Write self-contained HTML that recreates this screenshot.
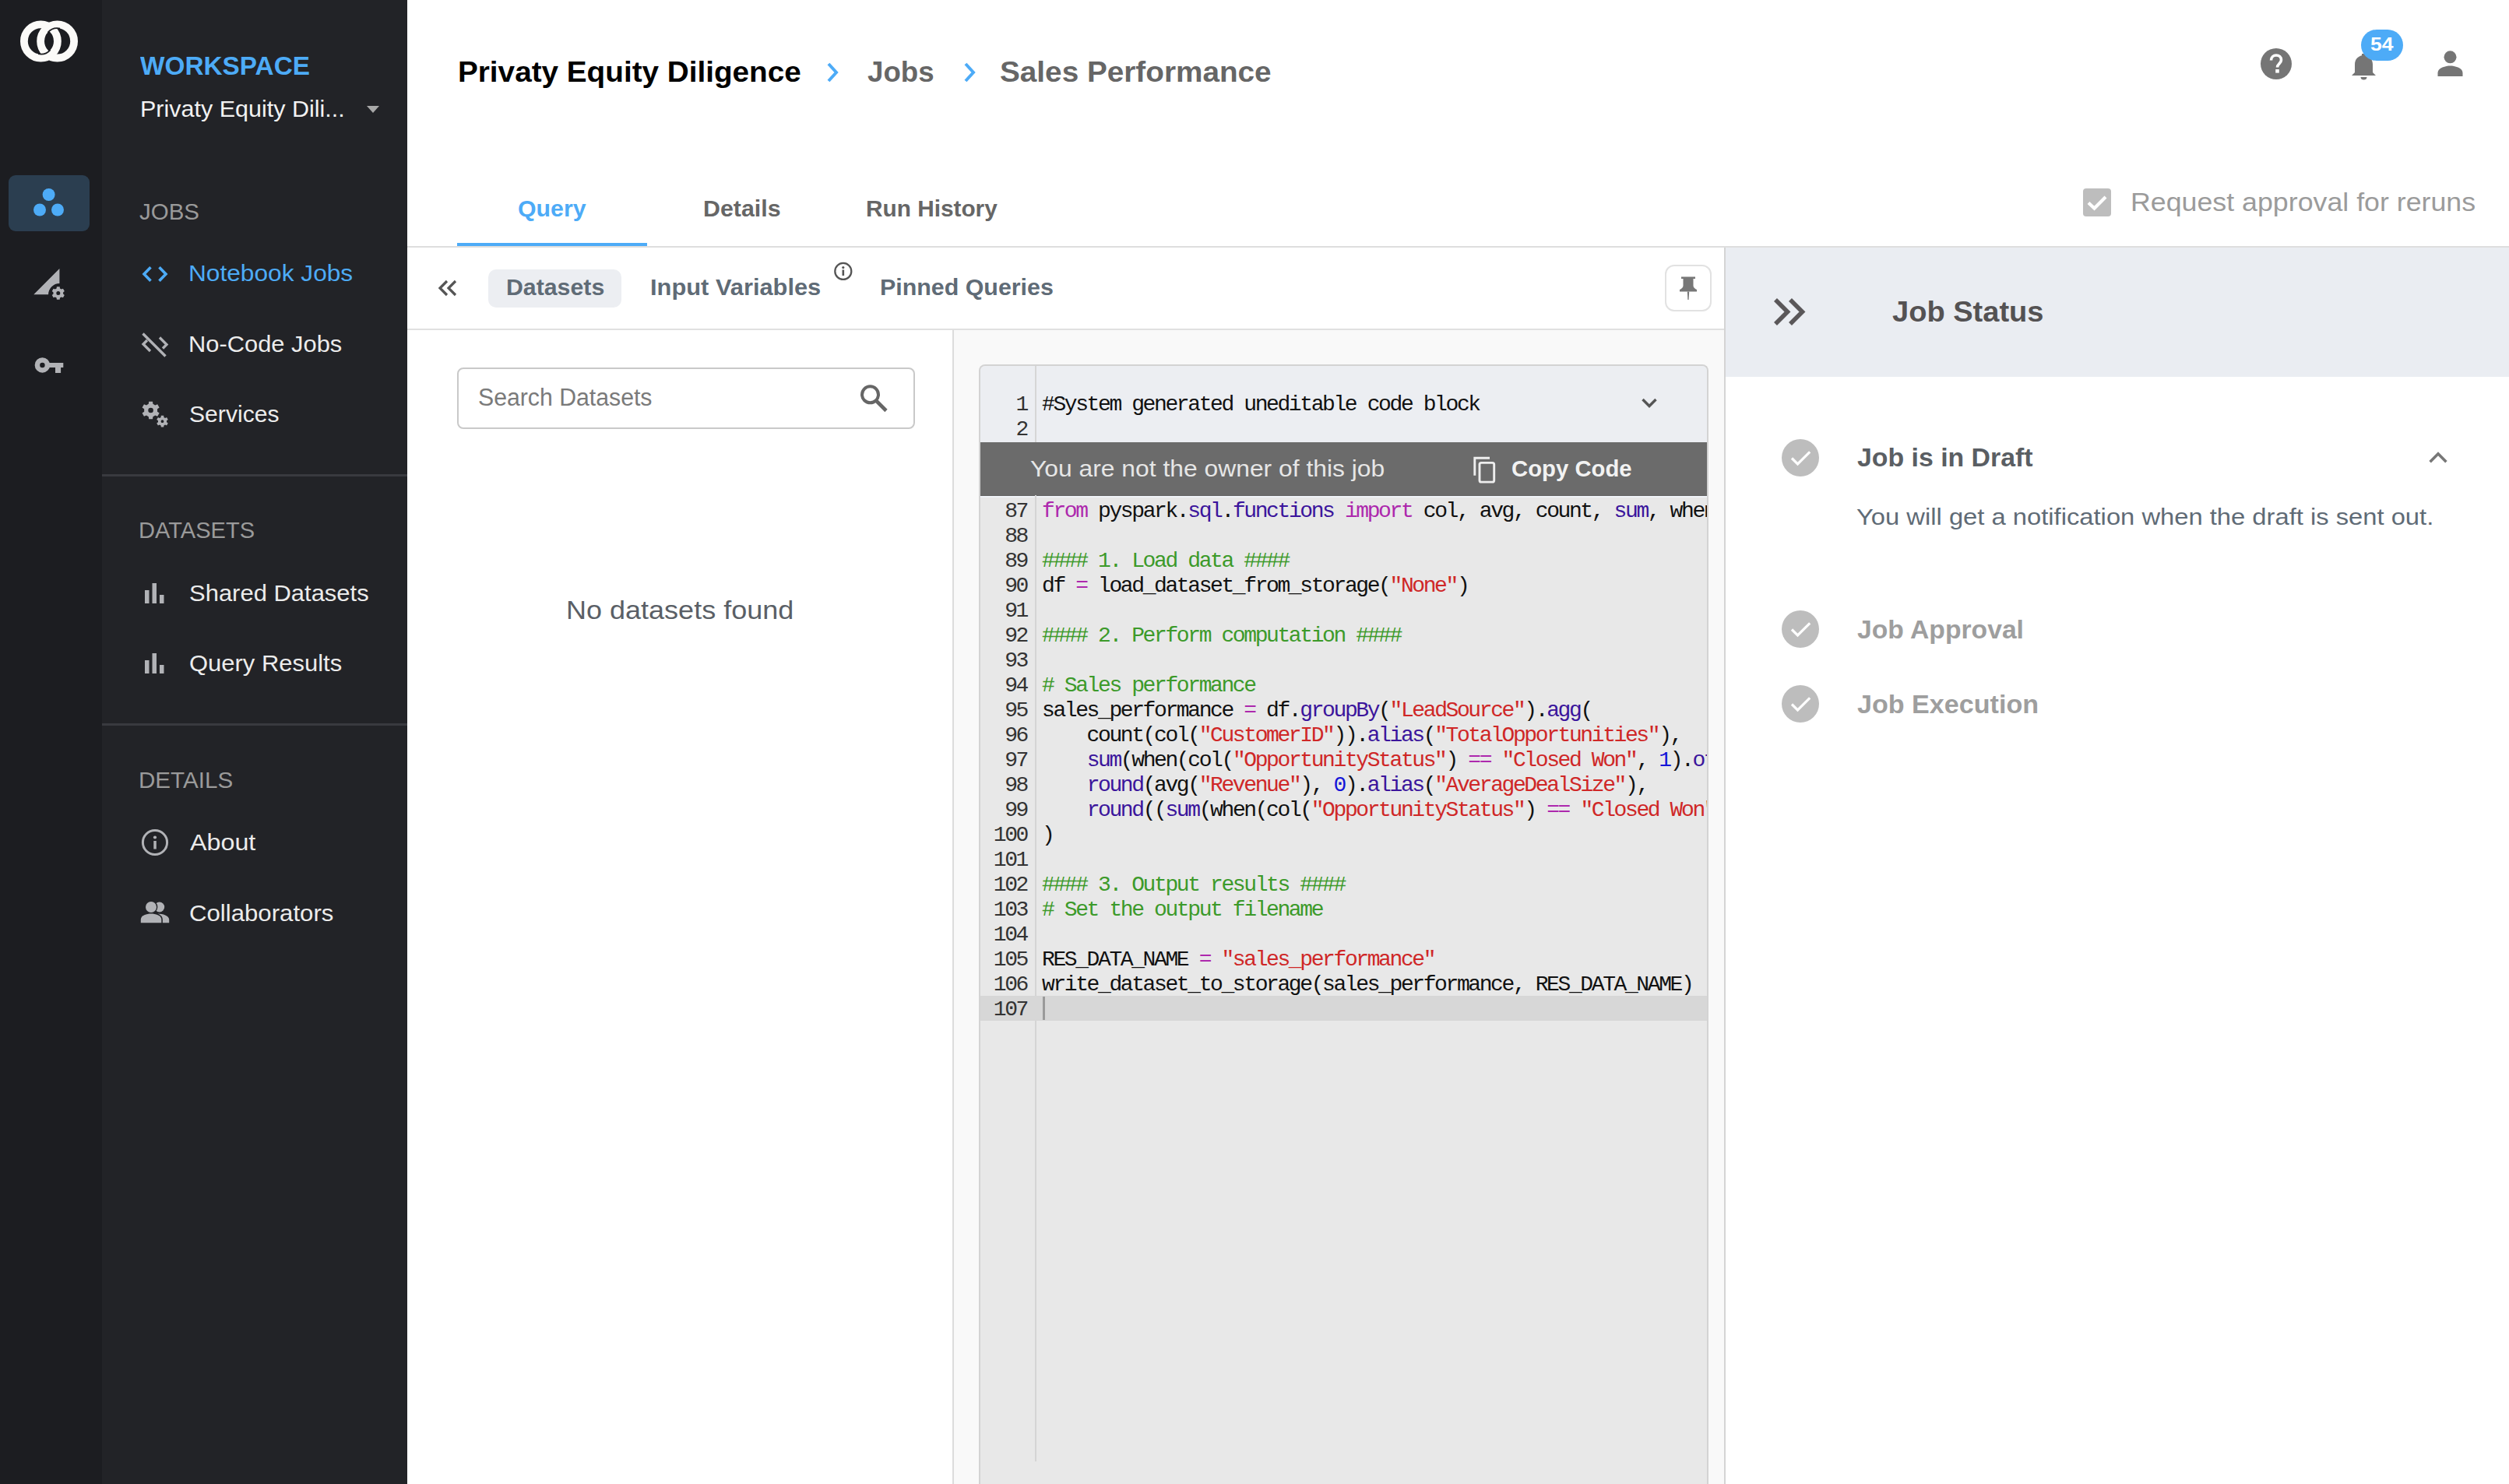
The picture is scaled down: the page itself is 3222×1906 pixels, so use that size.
<!DOCTYPE html><html><head><meta charset="utf-8"><style>
html,body{margin:0;padding:0;background:#fff;width:3222px;height:1906px;overflow:hidden;position:relative}
body>div,body>svg,.clip>div{position:absolute}
.t{white-space:nowrap;line-height:1;transform-origin:0 0;font-family:"Liberation Sans",sans-serif}
.ln{position:absolute;left:0px;width:60px;text-align:right;font-family:"Liberation Mono",monospace;font-size:28px;letter-spacing:-2.4px;line-height:32px;color:#333;white-space:pre}
.cl{position:absolute;left:79px;font-family:"Liberation Mono",monospace;font-size:28px;letter-spacing:-2.4px;line-height:32px;color:#111;white-space:pre}
.k{color:#ad28ad}.p{color:#3b159c}.s{color:#cf2727}.n{color:#1414d8}.c{color:#3c9a2a}
.clip{position:absolute;left:1259px;top:470px;width:933px;height:1436px;overflow:hidden}
</style></head><body>
<div style="left:0px;top:0px;width:131px;height:1906px;background:#1c1d21;"></div>
<div style="left:131px;top:0px;width:392px;height:1906px;background:#222327;"></div>
<div style="left:131px;top:609px;width:392px;height:3px;background:#393a3f;"></div>
<div style="left:131px;top:929px;width:392px;height:3px;background:#393a3f;"></div>
<div style="left:11px;top:225px;width:104px;height:72px;background:#2b3e50;border-radius:9px"></div>
<div style="left:587px;top:312px;width:244px;height:4px;background:#4dabf7;"></div>
<div style="left:523px;top:316px;width:2699px;height:2px;background:#dedede;"></div>
<div style="left:523px;top:422px;width:1691px;height:2px;background:#e0e0e0;"></div>
<div style="left:627px;top:346px;width:171px;height:49px;background:#eceef2;border-radius:10px"></div>
<div style="left:587px;top:472px;width:588px;height:79px;background:#fff;border:2px solid #c9c9c9;border-radius:8px;box-sizing:border-box"></div>
<div style="left:1225px;top:424px;width:989px;height:1482px;background:#f9f9f9;"></div>
<div style="left:1223px;top:424px;width:2px;height:1482px;background:#dcdcdc;"></div>
<div style="left:2214px;top:318px;width:2px;height:1588px;background:#d4d4d4;"></div>
<div style="left:2216px;top:318px;width:1006px;height:166px;background:#eaedf2;"></div>
<div style="left:2138px;top:340px;width:60px;height:60px;background:#fff;border:2px solid #e2e2e2;border-radius:12px;box-sizing:border-box"></div>
<div style="left:2675px;top:242px;width:36px;height:36px;background:#bdbdbd;border-radius:4px"></div>
<svg style="left:3015px;top:60px" width="42" height="46" viewBox="0 0 42 46"><path d="M5 37 L9 33 V23 C9 16 13 12.5 18 11.2 V9 H23 V11.2 C28 12.5 32 16 32 23 V33 L36 37 Z" fill="#757575"/><path d="M16.5 39 H24.5 C24.5 41.5 22.8 42.5 20.5 42.5 C18.2 42.5 16.5 41.5 16.5 39 Z" fill="#757575"/></svg>
<div style="left:3032px;top:38px;width:54px;height:40px;background:#4dabf7;border-radius:20px"></div>
<div style="left:1257px;top:468px;width:937px;height:1438px;background:#e8e8e8;border:2px solid #d3d3d3;border-bottom:none;border-radius:8px 8px 0 0;box-sizing:border-box"></div>
<div style="left:1259px;top:470px;width:933px;height:98px;background:#eceef2;border-radius:6px 6px 0 0"></div>
<div style="left:1329px;top:470px;width:2px;height:98px;background:#d6d6d6;"></div>
<div style="left:1259px;top:568px;width:933px;height:69px;background:#6b6b6b;"></div>
<div style="left:1259px;top:636px;width:933px;height:1px;background:#636363;"></div>
<div style="left:1259px;top:637px;width:933px;height:2px;background:#f0f3f7;"></div>
<div style="left:1329px;top:636px;width:2px;height:1241px;background:#d4d4d4;"></div>
<div style="left:1259px;top:1279px;width:933px;height:32px;background:#d7d7d7;"></div>
<div style="left:1339px;top:1280px;width:3px;height:30px;background:#9a9a9a;"></div>
<div class="clip"><div class="ln" style="top:34px">1</div>
<div class="cl" style="top:34px">#System generated uneditable code block</div>
<div class="ln" style="top:66px">2</div>
<div class="ln" style="top:171px">87</div>
<div class="cl" style="top:171px"><span class="k">from</span> pyspark.<span class="p">sql</span>.<span class="p">functions</span> <span class="k">import</span> col, avg, count, <span class="p">sum</span>, when, round</div>
<div class="ln" style="top:203px">88</div>
<div class="ln" style="top:235px">89</div>
<div class="cl" style="top:235px"><span class="c">#### 1. Load data ####</span></div>
<div class="ln" style="top:267px">90</div>
<div class="cl" style="top:267px">df <span class="k">=</span> load_dataset_from_storage(<span class="s">&quot;None&quot;</span>)</div>
<div class="ln" style="top:299px">91</div>
<div class="ln" style="top:331px">92</div>
<div class="cl" style="top:331px"><span class="c">#### 2. Perform computation ####</span></div>
<div class="ln" style="top:363px">93</div>
<div class="ln" style="top:395px">94</div>
<div class="cl" style="top:395px"><span class="c"># Sales performance</span></div>
<div class="ln" style="top:427px">95</div>
<div class="cl" style="top:427px">sales_performance <span class="k">=</span> df.<span class="p">groupBy</span>(<span class="s">&quot;LeadSource&quot;</span>).<span class="p">agg</span>(</div>
<div class="ln" style="top:459px">96</div>
<div class="cl" style="top:459px">    count(col(<span class="s">&quot;CustomerID&quot;</span>)).<span class="p">alias</span>(<span class="s">&quot;TotalOpportunities&quot;</span>),</div>
<div class="ln" style="top:491px">97</div>
<div class="cl" style="top:491px">    <span class="p">sum</span>(when(col(<span class="s">&quot;OpportunityStatus&quot;</span>) <span class="k">==</span> <span class="s">&quot;Closed Won&quot;</span>, <span class="n">1</span>).<span class="p">otherwise</span>(<span class="n">0</span>))</div>
<div class="ln" style="top:523px">98</div>
<div class="cl" style="top:523px">    <span class="p">round</span>(avg(<span class="s">&quot;Revenue&quot;</span>), <span class="n">0</span>).<span class="p">alias</span>(<span class="s">&quot;AverageDealSize&quot;</span>),</div>
<div class="ln" style="top:555px">99</div>
<div class="cl" style="top:555px">    <span class="p">round</span>((<span class="p">sum</span>(when(col(<span class="s">&quot;OpportunityStatus&quot;</span>) <span class="k">==</span> <span class="s">&quot;Closed Won&quot;</span>, <span class="n">1</span>)</div>
<div class="ln" style="top:587px">100</div>
<div class="cl" style="top:587px">)</div>
<div class="ln" style="top:619px">101</div>
<div class="ln" style="top:651px">102</div>
<div class="cl" style="top:651px"><span class="c">#### 3. Output results ####</span></div>
<div class="ln" style="top:683px">103</div>
<div class="cl" style="top:683px"><span class="c"># Set the output filename</span></div>
<div class="ln" style="top:715px">104</div>
<div class="ln" style="top:747px">105</div>
<div class="cl" style="top:747px">RES_DATA_NAME <span class="k">=</span> <span class="s">&quot;sales_performance&quot;</span></div>
<div class="ln" style="top:779px">106</div>
<div class="cl" style="top:779px">write_dataset_to_storage(sales_performance, RES_DATA_NAME)</div>
<div class="ln" style="top:811px">107</div></div>
<div class="t" style="left:179.90px;top:67.30px;font-size:34px;color:#4dabf7;font-weight:700;transform:scaleX(0.9807)">WORKSPACE</div>
<div class="t" style="left:179.57px;top:125.00px;font-size:30px;color:#f2f2f2;font-weight:400;transform:scaleX(1.0167)">Privaty Equity Dili...</div>
<div class="t" style="left:178.80px;top:256.50px;font-size:30px;color:#9a9a9a;font-weight:400;transform:scaleX(0.9826)">JOBS</div>
<div class="t" style="left:242.29px;top:336.20px;font-size:30px;color:#4dabf7;font-weight:400;transform:scaleX(1.0552)">Notebook Jobs</div>
<div class="t" style="left:242.34px;top:426.90px;font-size:30px;color:#ececec;font-weight:400;transform:scaleX(1.0288)">No-Code Jobs</div>
<div class="t" style="left:242.50px;top:516.70px;font-size:30px;color:#ececec;font-weight:400;transform:scaleX(1.0041)">Services</div>
<div class="t" style="left:178.36px;top:665.90px;font-size:30px;color:#9a9a9a;font-weight:400;transform:scaleX(0.9688)">DATASETS</div>
<div class="t" style="left:242.67px;top:747.00px;font-size:30px;color:#ececec;font-weight:400;transform:scaleX(1.0322)">Shared Datasets</div>
<div class="t" style="left:242.67px;top:836.70px;font-size:30px;color:#ececec;font-weight:400;transform:scaleX(1.0321)">Query Results</div>
<div class="t" style="left:178.33px;top:986.50px;font-size:30px;color:#9a9a9a;font-weight:400;transform:scaleX(0.9866)">DETAILS</div>
<div class="t" style="left:243.70px;top:1067.00px;font-size:30px;color:#ececec;font-weight:400;transform:scaleX(1.0751)">About</div>
<div class="t" style="left:242.66px;top:1157.50px;font-size:30px;color:#ececec;font-weight:400;transform:scaleX(1.0390)">Collaborators</div>
<div class="t" style="left:587.81px;top:74.45px;font-size:37px;color:#000000;font-weight:700;transform:scaleX(1.0457)">Privaty Equity Diligence</div>
<div class="t" style="left:1114.00px;top:74.45px;font-size:37px;color:#666666;font-weight:700;transform:scaleX(0.9909)">Jobs</div>
<div class="t" style="left:1283.95px;top:74.45px;font-size:37px;color:#666666;font-weight:700;transform:scaleX(1.0464)">Sales Performance</div>
<div class="t" style="left:664.99px;top:253.40px;font-size:30px;color:#4dabf7;font-weight:700;transform:scaleX(1.0091)">Query</div>
<div class="t" style="left:903.18px;top:253.40px;font-size:30px;color:#666666;font-weight:700;transform:scaleX(1.0116)">Details</div>
<div class="t" style="left:1111.71px;top:253.40px;font-size:30px;color:#666666;font-weight:700;transform:scaleX(0.9927)">Run History</div>
<div class="t" style="left:2735.63px;top:242.65px;font-size:33px;color:#9b9b9b;font-weight:400;transform:scaleX(1.0833)">Request approval for reruns</div>
<div class="t" style="left:650.16px;top:355.15px;font-size:29px;color:#5f6b76;font-weight:700;transform:scaleX(1.0440)">Datasets</div>
<div class="t" style="left:834.94px;top:355.15px;font-size:29px;color:#5f6b76;font-weight:700;transform:scaleX(1.0629)">Input Variables</div>
<div class="t" style="left:1130.35px;top:355.15px;font-size:29px;color:#5f6b76;font-weight:700;transform:scaleX(1.0475)">Pinned Queries</div>
<div class="t" style="left:614.42px;top:494.65px;font-size:31px;color:#7a7a7a;font-weight:400;transform:scaleX(0.9751)">Search Datasets</div>
<div class="t" style="left:726.62px;top:766.75px;font-size:33px;color:#5a5f66;font-weight:400;transform:scaleX(1.0911)">No datasets found</div>
<div class="t" style="left:1322.50px;top:587.10px;font-size:30px;color:#e6e6e6;font-weight:400;transform:scaleX(1.0607)">You are not the owner of this job</div>
<div class="t" style="left:1941.02px;top:587.10px;font-size:30px;color:#f2f2f2;font-weight:700;transform:scaleX(0.9767)">Copy Code</div>
<div class="t" style="left:2429.60px;top:382.35px;font-size:37px;color:#545253;font-weight:700;transform:scaleX(1.0283)">Job Status</div>
<div class="t" style="left:2384.50px;top:570.10px;font-size:34px;color:#5a5e63;font-weight:700;transform:scaleX(0.9948)">Job is in Draft</div>
<div class="t" style="left:2383.70px;top:650.35px;font-size:29px;color:#5f6b76;font-weight:400;transform:scaleX(1.1288)">You will get a notification when the draft is sent out.</div>
<div class="t" style="left:2384.50px;top:790.50px;font-size:34px;color:#9e9e9e;font-weight:700;transform:scaleX(0.9907)">Job Approval</div>
<div class="t" style="left:2384.50px;top:886.90px;font-size:34px;color:#9e9e9e;font-weight:700;transform:scaleX(1.0030)">Job Execution</div>
<div class="t" style="left:3043.70px;top:45.30px;font-size:24px;color:#ffffff;font-weight:700;transform:scaleX(1.1080)">54</div>
<svg style="left:0px;top:0px" width="130" height="100" viewBox="0 0 130 100"><g fill="none" stroke="#fbfaf8" stroke-width="9.8">
<ellipse cx="52.4" cy="52.9" rx="21.5" ry="21.6"/><ellipse cx="73.6" cy="52.9" rx="21.5" ry="21.6"/></g>
<g fill="none" stroke="#1c1d21" stroke-width="1.8">
<path d="M61.41 41.73 A16.4 16.7 0 0 1 77.01 36.56"/>
<path d="M64.59 64.07 A16.4 16.7 0 0 1 48.99 69.24"/></g></svg>
<svg style="left:40px;top:236px" width="46" height="46" viewBox="0 0 46 46"><g fill="#4dabf7"><circle cx="22.6" cy="14" r="8"/><circle cx="11" cy="33.5" r="8"/><circle cx="34" cy="33.5" r="8"/></g></svg>
<svg style="left:35px;top:335px" width="60" height="60" viewBox="0 0 60 60"><path d="M8.3 43.3 L41.4 9.9 V28.9 A14.4 14.4 0 0 0 27.1 43.3 Z" fill="#b1b2b6"/><path fill-rule="evenodd" fill="#b1b2b6" d="M37.61 35.49 L37.91 33.32 L41.69 33.32 L41.99 35.49 L43.91 36.60 L45.94 35.77 L47.83 39.04 L46.10 40.39 L46.10 42.61 L47.83 43.96 L45.94 47.23 L43.91 46.40 L41.99 47.51 L41.69 49.68 L37.91 49.68 L37.61 47.51 L35.69 46.40 L33.66 47.23 L31.77 43.96 L33.50 42.61 L33.50 40.39 L31.77 39.04 L33.66 35.77 L35.69 36.60 Z M42.30 41.50 A2.5 2.5 0 1 0 37.30 41.50 A2.5 2.5 0 1 0 42.30 41.50 Z"/></svg>
<svg style="left:40px;top:452px" width="48" height="34" viewBox="0 0 48 34"><circle cx="14.4" cy="16.9" r="6.5" fill="none" stroke="#b1b2b6" stroke-width="6.5"/><path d="M20 13.9 H41.3 V20.1 H38.1 V27 H31 V20.1 H20 Z" fill="#b1b2b6"/></svg>
<svg style="left:178px;top:336px" width="42" height="32" viewBox="0 0 42 32"><g fill="none" stroke="#4dabf7" stroke-width="3.6" stroke-linecap="butt"><path d="M15.5 7.2 L7 16 L15.5 24.8"/><path d="M26.5 7.2 L35 16 L26.5 24.8"/></g></svg>
<svg style="left:170px;top:420px" width="60" height="60" viewBox="0 0 60 60"><g fill="none" stroke="#b1b2b6" stroke-width="3.3"><path d="M13.5 8.5 L42.5 37.5"/><path d="M19 17 L14 22 L23 31"/><path d="M35 13.5 L44 22.5 L39 27.5"/></g></svg>
<svg style="left:170px;top:500px" width="60" height="60" viewBox="0 0 60 60"><path fill-rule="evenodd" fill="#b1b2b6" d="M20.80 18.87 L21.19 15.65 L26.01 15.65 L26.40 18.87 L29.24 20.51 L32.22 19.24 L34.63 23.42 L32.04 25.36 L32.04 28.64 L34.63 30.58 L32.22 34.76 L29.24 33.49 L26.40 35.13 L26.01 38.35 L21.19 38.35 L20.80 35.13 L17.96 33.49 L14.98 34.76 L12.57 30.58 L15.16 28.64 L15.16 25.36 L12.57 23.42 L14.98 19.24 L17.96 20.51 Z M26.90 27.00 A3.3 3.3 0 1 0 20.30 27.00 A3.3 3.3 0 1 0 26.90 27.00 Z"/><path fill-rule="evenodd" fill="#b1b2b6" d="M36.58 35.94 L36.79 33.79 L40.21 33.79 L40.42 35.94 L42.10 36.91 L44.06 36.02 L45.77 38.98 L44.01 40.23 L44.01 42.17 L45.77 43.42 L44.06 46.38 L42.10 45.49 L40.42 46.46 L40.21 48.61 L36.79 48.61 L36.58 46.46 L34.90 45.49 L32.94 46.38 L31.23 43.42 L32.99 42.17 L32.99 40.23 L31.23 38.98 L32.94 36.02 L34.90 36.91 Z M40.40 41.20 A1.9 1.9 0 1 0 36.60 41.20 A1.9 1.9 0 1 0 40.40 41.20 Z"/></svg>
<svg style="left:183px;top:748px" width="34" height="32" viewBox="0 0 34 32"><g fill="#b1b2b6"><rect x="3" y="10" width="5.5" height="17"/><rect x="12.5" y="1" width="5.5" height="26"/><rect x="22" y="16" width="5.5" height="11"/></g></svg>
<svg style="left:183px;top:838px" width="34" height="32" viewBox="0 0 34 32"><g fill="#b1b2b6"><rect x="3" y="10" width="5.5" height="17"/><rect x="12.5" y="1" width="5.5" height="26"/><rect x="22" y="16" width="5.5" height="11"/></g></svg>
<svg style="left:178px;top:1061px" width="42" height="42" viewBox="0 0 42 42"><circle cx="21" cy="21" r="15.6" fill="none" stroke="#b1b2b6" stroke-width="3"/><rect x="19.3" y="19" width="3.5" height="10.5" fill="#b1b2b6"/><circle cx="21" cy="14.5" r="2.1" fill="#b1b2b6"/></svg>
<svg style="left:176px;top:1152px" width="46" height="38" viewBox="0 0 46 38"><g fill="#b1b2b6"><circle cx="28.8" cy="13" r="6.4"/><circle cx="18" cy="13" r="8.4" fill="#222327"/><circle cx="18" cy="13" r="7"/><path d="M26.5 21.4 C33 21.6 41.2 23.8 41.2 29 V33.2 H32.3 V29 C32.3 25.8 30.2 23.2 26.5 21.4 Z"/><path d="M4.8 33.2 V29 C4.8 23.5 12.5 21.4 18 21.4 C23.5 21.4 31.3 23.5 31.3 29 V33.2 Z" stroke="#222327" stroke-width="3" paint-order="stroke"/></g></svg>
<svg style="left:470px;top:135px" width="18" height="11" viewBox="0 0 18 11"><path d="M1 1 H17 L9 10 Z" fill="#a8a8a8"/></svg>
<svg style="left:1058px;top:78px" width="24" height="30" viewBox="0 0 24 30"><path d="M6 4 L16 15 L6 26" fill="none" stroke="#4dabf7" stroke-width="4"/></svg>
<svg style="left:1234px;top:78px" width="24" height="30" viewBox="0 0 24 30"><path d="M6 4 L16 15 L6 26" fill="none" stroke="#4dabf7" stroke-width="4"/></svg>
<svg style="left:2900px;top:60px" width="46" height="46" viewBox="0 0 46 46"><circle cx="23" cy="22" r="20" fill="#757575"/><path d="M16.5 17.5 C16.5 13.5 19.5 11 23 11 C26.8 11 29.5 13.5 29.5 17 C29.5 21.5 24.5 22 24.5 26.5" fill="none" stroke="#fff" stroke-width="3.6"/><rect x="22.2" y="29" width="4.6" height="4.6" fill="#fff"/></svg>
<svg style="left:3126px;top:62px" width="42" height="40" viewBox="0 0 42 40"><circle cx="20.5" cy="11.3" r="8" fill="#757575"/><path d="M4.5 36 V31.5 C4.5 25 15 22.5 20.5 22.5 C26 22.5 36.5 25 36.5 31.5 V36 Z" fill="#757575"/></svg>
<svg style="left:2675px;top:242px" width="36" height="36" viewBox="0 0 36 36"><path d="M7 18.5 L14.5 25.5 L29 11" fill="none" stroke="#fff" stroke-width="4.2"/></svg>
<svg style="left:558px;top:354px" width="32" height="32" viewBox="0 0 32 32"><g fill="none" stroke="#555" stroke-width="3.2"><path d="M16 7 L7 16 L16 25"/><path d="M27 7 L18 16 L27 25"/></g></svg>
<svg style="left:1068px;top:334px" width="30" height="30" viewBox="0 0 30 30"><circle cx="14.8" cy="14.4" r="10.5" fill="none" stroke="#555" stroke-width="2.3"/><rect x="13.5" y="12.5" width="2.6" height="7.5" fill="#555"/><circle cx="14.8" cy="9.6" r="1.6" fill="#555"/></svg>
<svg style="left:2150px;top:350px" width="36" height="40" viewBox="0 0 36 40"><path d="M9 5.5 H27 V8 H24.5 V17 C24.5 19.5 27 21 29 22 V24.5 H7 V22 C9 21 11.5 19.5 11.5 17 V8 H9 Z" fill="#777"/><path d="M16.8 24.5 H19.2 L18.6 35 H17.4 Z" fill="#777"/></svg>
<svg style="left:1100px;top:490px" width="44" height="44" viewBox="0 0 44 44"><circle cx="17.5" cy="16.8" r="10.5" fill="none" stroke="#666" stroke-width="4"/><path d="M25 24.5 L38 37.5" stroke="#666" stroke-width="4.6"/></svg>
<svg style="left:2102px;top:505px" width="32" height="26" viewBox="0 0 32 26"><path d="M7.5 8 L16 16.5 L24.5 8" fill="none" stroke="#555" stroke-width="3.4"/></svg>
<svg style="left:1886px;top:582px" width="40" height="42" viewBox="0 0 40 42"><g fill="none" stroke="#eeeeee" stroke-width="2.9"><rect x="14" y="12.4" width="18.7" height="24.7" rx="2.2"/><path d="M7.8 28.7 V6.2 H27"/></g></svg>
<svg style="left:2272px;top:378px" width="54" height="46" viewBox="0 0 54 46"><g fill="none" stroke="#5a5759" stroke-width="5.6" stroke-linecap="butt"><path d="M8 7 L23.5 22.5 L8 38"/><path d="M27 7 L42.5 22.5 L27 38"/></g></svg>
<svg style="left:2287.5px;top:563.7px" width="48" height="48" viewBox="0 0 48 48"><circle cx="24" cy="24" r="24" fill="#bdbdbd"/><path d="M13 24.5 L20.5 32 L36.2 16.3" fill="none" stroke="#fff" stroke-width="3.2"/></svg>
<svg style="left:2287.5px;top:783.6px" width="48" height="48" viewBox="0 0 48 48"><circle cx="24" cy="24" r="24" fill="#bdbdbd"/><path d="M13 24.5 L20.5 32 L36.2 16.3" fill="none" stroke="#fff" stroke-width="3.2"/></svg>
<svg style="left:2287.5px;top:880px" width="48" height="48" viewBox="0 0 48 48"><circle cx="24" cy="24" r="24" fill="#bdbdbd"/><path d="M13 24.5 L20.5 32 L36.2 16.3" fill="none" stroke="#fff" stroke-width="3.2"/></svg>
<svg style="left:3112px;top:572px" width="36" height="30" viewBox="0 0 36 30"><path d="M8.6 21.2 L19 10.8 L29.4 21.2" fill="none" stroke="#777" stroke-width="3.6"/></svg>
</body></html>
